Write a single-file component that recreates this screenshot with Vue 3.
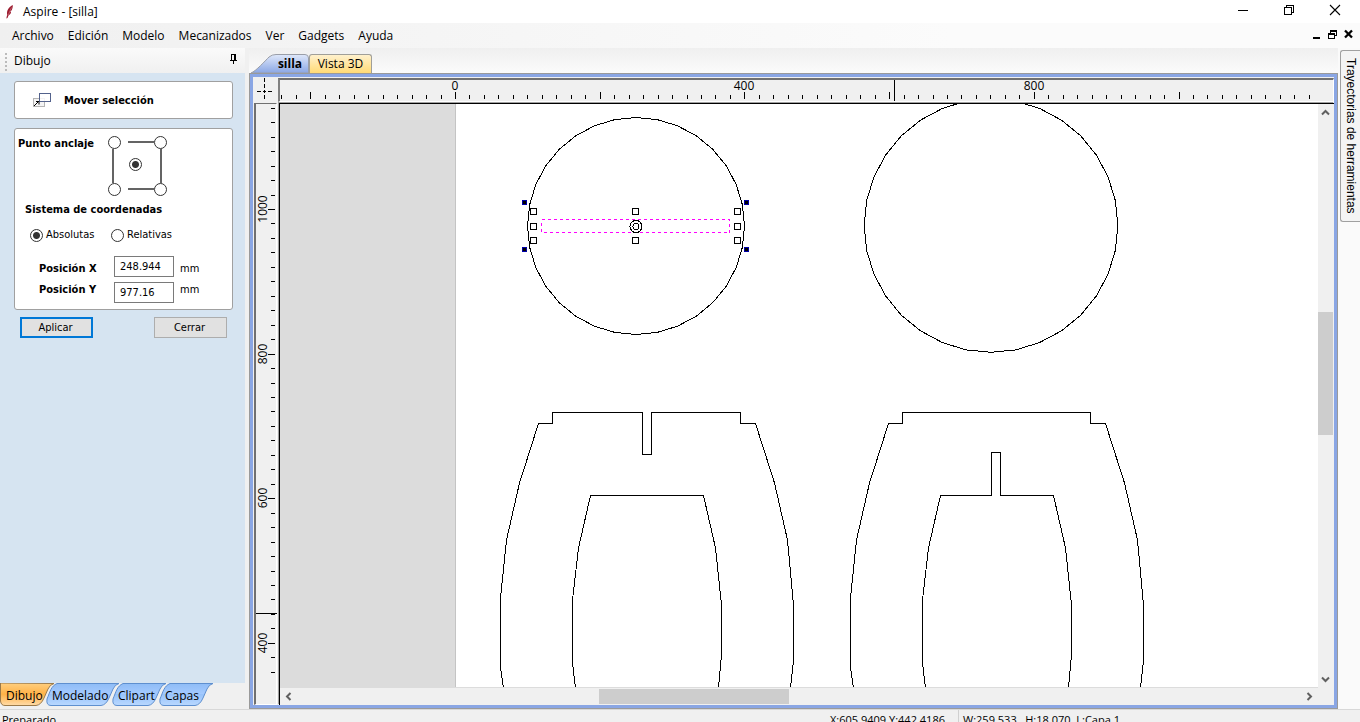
<script setup>
import { ref } from 'vue'

const menus = ['Archivo', 'Edición', 'Modelo', 'Mecanizados', 'Ver', 'Gadgets', 'Ayuda']
const anchors = [
  { id: 'tl', label: 'Superior izquierda' },
  { id: 'tr', label: 'Superior derecha' },
  { id: 'c', label: 'Centro' },
  { id: 'bl', label: 'Inferior izquierda' },
  { id: 'br', label: 'Inferior derecha' }
]
const anchor = ref('c')
const coords = ref('abs')
const posX = ref('248.944')
const posY = ref('977.16')

const STEP = 14.47
const hTicks = []
for (let i = -12; i <= 59; i++) {
  hTicks.push({ x: Math.round(175 + i * STEP), major: i % 10 === 0, label: i >= 0 && i % 20 === 0 ? String(i * 20) : '' })
}
const vTicks = []
for (let i = -7; i <= 32; i++) {
  vTicks.push({ y: Math.round(105 + i * 14.46), major: i % 10 === 0, label: i % 10 === 0 ? String(1000 - i * 20) : '' })
}

function ring(cx, cy, r, n) {
  return Array.from({ length: n }, (_, i) => {
    const a = (i * 2 * Math.PI) / n
    return (cx + r * Math.cos(a)).toFixed(1) + ',' + (cy + r * Math.sin(a)).toFixed(1)
  }).join(' ')
}
const smallRing = ring(356, 122, 108.5, 32)
const bigRing = ring(711, 121.5, 126.8, 32)

const handles = [
  [253, 107], [355, 107], [457, 107],
  [253, 122], [457, 122],
  [253, 136], [355, 136], [457, 136]
]
const corners = [[242, 96], [464, 96], [242, 143], [464, 143]]
const bottomTabs = [
  { name: 'Dibujo', cls: 't1', w: 54 },
  { name: 'Modelado', cls: 't2', w: 73 },
  { name: 'Clipart', cls: 't3', w: 54 },
  { name: 'Capas', cls: 't4', w: 54 }
]
function tabPath(w) {
  return `M11 0.5 C5 3 4 9 1 16 Q0 22.5 5 22.5 H${w - 18} Q${w - 13} 22 ${w - 10} 15 L${w - 6} 6 Q${w - 4} 1.5 ${w} 0.5 Z`
}
</script>

<template>
  <div class="app">
    <header class="titlebar">
      <svg class="logo" width="8" height="14" viewBox="0 0 8 14">
        <path d="M6.8 0C3 1.500 .3 6 1.200 9.500L.3 13.500 1.500 13 2.500 10.500C4.500 9.500 5 8 5 6.800L4 6.800 5.700 5.200C6.500 3.500 6.800 2 6.800 0Z" fill="#9c1c30" />
        <path d="M5.500 2.500 2 10.500" stroke="#d98a94" stroke-width=".6" />
      </svg>
      <span class="title">Aspire - [silla]</span>
      <div class="winbtns">
        <button type="button" aria-label="Minimizar"><svg width="12" height="12" shape-rendering="crispEdges"><path d="M1 6.500H11" stroke="#000" /></svg></button>
        <button type="button" aria-label="Restaurar"><svg width="12" height="12" shape-rendering="crispEdges"><path d="M1.500 3.500H8.500V10.500H1.500ZM3.500 3V1.500H10.500V8.500H9" fill="none" stroke="#000" /></svg></button>
        <button type="button" aria-label="Cerrar ventana"><svg width="12" height="12"><path d="M1 1 11 11M11 1 1 11" stroke="#000" stroke-width="1.100" /></svg></button>
      </div>
    </header>

    <nav class="menubar">
      <button v-for="m in menus" :key="m" type="button" class="menu">{{ m }}</button>
      <div class="mdi">
        <button type="button" aria-label="Minimizar documento"><svg width="11" height="11" shape-rendering="crispEdges"><path d="M2 9H9" stroke="#000" stroke-width="2" /></svg></button>
        <button type="button" aria-label="Restaurar documento"><svg width="11" height="11" shape-rendering="crispEdges"><path d="M1.500 5V9.500H7.500V5M3.500 4V1.500H9.500V6.500H8" fill="none" stroke="#000" /><path d="M1 5H8M3 2H10" stroke="#000" stroke-width="2" /></svg></button>
        <button type="button" aria-label="Cerrar documento"><svg width="11" height="11"><path d="M2 1.500 9 8.500M9 1.500 2 8.500" stroke="#000" stroke-width="2.300" /></svg></button>
      </div>
    </nav>

    <main class="work">
      <aside class="panel">
        <div class="phead">
          <span class="grip"></span>
          <span>Dibujo</span>
          <button type="button" class="pin" aria-label="Fijar panel">
            <svg width="9" height="10" shape-rendering="crispEdges"><path d="M2.500 0.500H6.500V6M2.500 0V6M1 6.500H8M4.500 6V10" fill="none" stroke="#000" /><path d="M6 0V6" stroke="#000" stroke-width="2" /></svg>
          </button>
        </div>
        <form class="pbody" @submit.prevent>
          <h1 class="tool">
            <svg width="20" height="17" viewBox="0 0 20 17">
              <rect x="1.500" y="6.500" width="11" height="8" fill="#f4f4f4" stroke="#b4b4b4" />
              <rect x="7.500" y="1.500" width="11" height="8" fill="#fff" fill-opacity=".85" stroke="#53628c" />
              <path d="M2 14 6.500 9.500M4 9.500H7V12.500" fill="none" stroke="#000" />
            </svg>
            <span>Mover selección</span>
          </h1>
          <div class="box">
            <div class="anchorrow">
              <b>Punto anclaje</b>
              <div class="anchors" role="radiogroup" aria-label="Punto anclaje">
                <svg class="wires" width="59" height="60" shape-rendering="crispEdges"><path d="M20 6H46M20 53H46M5 13V47M53 13V47" stroke="#646464" stroke-width="2" /></svg>
                <input v-for="a in anchors" :key="a.id" v-model="anchor" type="radio" name="anchor" :value="a.id" :class="a.id" :aria-label="a.label">
              </div>
            </div>
            <b class="sys">Sistema de coordenadas</b>
            <div class="modes">
              <label><input v-model="coords" type="radio" name="coords" value="abs">Absolutas</label>
              <label><input v-model="coords" type="radio" name="coords" value="rel">Relativas</label>
            </div>
            <div class="fields">
              <label class="upper" for="px">Posición X</label><input id="px" v-model="posX" type="text"><span class="upper">mm</span>
              <label class="lower" for="py">Posición Y</label><input id="py" v-model="posY" type="text"><span class="lower">mm</span>
            </div>
          </div>
          <div class="actions">
            <button type="submit" class="primary">Aplicar</button>
            <button type="button">Cerrar</button>
          </div>
        </form>
        <div class="ptabs">
          <button v-for="t in bottomTabs" :key="t.name" type="button" :class="['ptab', t.cls]">
            <svg :width="t.w + 1" height="24">
              <defs>
                <linearGradient id="gBlue" x1="0" y1="0" x2="0" y2="1"><stop offset="0" stop-color="#8fbcf6" /><stop offset=".48" stop-color="#a4caff" /><stop offset=".5" stop-color="#98c3fb" /><stop offset="1" stop-color="#b9d8ff" /></linearGradient>
                <linearGradient id="gOrange" x1="0" y1="0" x2="0" y2="1"><stop offset="0" stop-color="#ffcf80" /><stop offset=".5" stop-color="#ffb247" /><stop offset="1" stop-color="#ffdba8" /></linearGradient>
              </defs>
              <path v-if="t.cls === 't1'" d="M.5 0V18Q1 22.500 5 22.500H36Q41 22 44 15L48 6Q50 1.500 54 .5Z" fill="url(#gOrange)" stroke="#9b7a4a" />
              <path v-else :d="tabPath(t.w)" fill="url(#gBlue)" stroke="#5e8fcf" />
            </svg>
            <span>{{ t.name }}</span>
          </button>
        </div>
      </aside>

      <section class="dock">
        <div class="dtabs">
          <button type="button" class="dtab silla">
            <svg width="60" height="20">
              <defs><linearGradient id="gTab" x1="0" y1="0" x2="0" y2="1"><stop offset="0" stop-color="#dfe8fa" /><stop offset="1" stop-color="#8aa6e4" /></linearGradient></defs>
              <path d="M0 20C5 18 14 8 18 4Q21 1.500 25 1.500H54Q57.500 1.500 57.500 5V20Z" fill="url(#gTab)" stroke="#9a9ea8" />
            </svg>
            <b>silla</b>
          </button>
          <button type="button" class="dtab vista">Vista 3D</button>
        </div>
        <div class="frame">
          <div class="origin">
            <svg width="25" height="26" shape-rendering="crispEdges"><path d="M11.500 1V5M11.500 7V11M11.500 13V16M11.500 18V22M4 14.500H8M10 14.500H13M15 14.500H19" stroke="#000" /></svg>
          </div>
          <div class="hruler">
            <svg width="100%" height="21">
              <g shape-rendering="crispEdges" stroke="#000">
                <path v-for="t in hTicks" :key="t.x" :d="`M${t.x + 0.5} ${t.major ? 12 : 15}V19`" />
                <path d="M614.500 0V21" />
              </g>
              <g text-anchor="middle"><text v-for="t in hTicks.filter(k => k.label)" :key="t.label" :x="t.x" y="10">{{ t.label }}</text></g>
            </svg>
          </div>
          <div class="vruler">
            <svg width="21" height="100%">
              <g shape-rendering="crispEdges" stroke="#000">
                <path v-for="t in vTicks" :key="t.y" :d="`M${t.major ? 12 : 15} ${t.y + 0.5}H19`" />
                <path d="M0 509.500H21" />
              </g>
              <g text-anchor="middle"><text v-for="t in vTicks.filter(k => k.label)" :key="t.label" :transform="`translate(11 ${t.y}) rotate(-90)`">{{ t.label }}</text></g>
            </svg>
          </div>
          <div class="view">
            <div class="canvas">
              <svg width="100%" height="100%" shape-rendering="crispEdges" role="img" aria-label="Vectores de la pieza silla">
                <rect width="100%" height="100%" fill="#fff" />
                <rect width="175" height="100%" fill="#dcdcdc" />
                <rect x="175" width="1" height="100%" fill="#c4c4c4" />
                <g fill="none" stroke="#000">
                  <polygon :points="smallRing" />
                  <polygon :points="bigRing" />
                  <path d="M223.500 584 220.500 563V494L226.500 436 239.500 379 258.500 319.500H272.500V308.500H362.500V350.500H371.500V308.500H460.500V319.500H475.500L494.500 379 507.500 436 513.500 501V556L510.500 584" />
                  <path d="M295.500 584 292.500 559V496L298.500 444 310.500 391.500H423.500L435.500 444 441.500 501V551L438.500 584" />
                  <path d="M573.500 584 570.500 563V494L576.500 436 589.500 379 608.500 319.500H622.500V308.500H810.500V319.500H825.500L844.500 379 857.500 436 863.500 501V556L860.500 584" />
                  <path d="M645.500 584 642.500 559V496L648.500 444 660.500 391.500H711.500V348.500H720.500V391.500H773.500L785.500 444 791.500 501V551L788.500 584" />
                </g>
                <rect x="261.500" y="115.500" width="188" height="13" fill="none" stroke="#f0f" stroke-dasharray="3 3" />
                <rect v-for="(c, i) in corners" :key="'c' + i" :x="c[0] + .5" :y="c[1] + .5" width="4" height="4" fill="#000" stroke="#0000a8" />
                <g v-for="(h, i) in handles" :key="'h' + i"><rect :x="h[0] - 2.500" :y="h[1] - 2.500" width="6" height="6" fill="#fff" stroke="#000" /></g>
                <circle cx="356" cy="122.500" r="6" fill="none" stroke="#000" />
                <circle cx="356" cy="122.500" r="3" fill="none" stroke="#000" />
              </svg>
            </div>
            <div class="vscroll">
              <button type="button" aria-label="Subir"><svg width="9" height="7"><path d="M1 5.500 4.500 2 8 5.500" /></svg></button>
              <i class="va"></i><i class="vt"></i><i class="vb"></i>
              <button type="button" aria-label="Bajar"><svg width="9" height="7"><path d="M1 1.500 4.500 5 8 1.500" /></svg></button>
            </div>
            <div class="hscroll">
              <button type="button" aria-label="Izquierda"><svg width="7" height="9"><path d="M5.500 1 2 4.500 5.500 8" /></svg></button>
              <i class="ha"></i><i class="ht"></i><i class="hb"></i>
              <button type="button" aria-label="Derecha"><svg width="7" height="9"><path d="M1.500 1 5 4.500 1.500 8" /></svg></button>
            </div>
          </div>
        </div>
      </section>

      <aside class="side"><button type="button">Trayectorias de herramientas</button></aside>
    </main>

    <footer class="status">
      <span class="ready">Preparado</span>
      <span class="xy">X:605.9409 Y:442.4186</span>
      <span class="dims">W:259.533&nbsp;&nbsp; H:18.070&nbsp; L:Capa 1</span>
    </footer>
  </div>
</template>

<style>
html, body { margin: 0; overflow: hidden; }
</style>

<style scoped>
.app { height: 100vh; display: flex; flex-direction: column; overflow: hidden; background: #f0f0f0; color: #000; font: 12px/16px "Open Sans", "Noto Sans", sans-serif; }
.app * { box-sizing: border-box; }
button { padding: 0; margin: 0; border: 0; background: none; font: inherit; color: inherit; }
svg { display: block; }
.titlebar { flex: none; height: 23px; background: #fff; display: flex; align-items: center; padding-left: 6px; }
.title { margin-left: 9px; }
.winbtns { margin-left: auto; display: flex; align-self: flex-start; padding-right: 2px; }
.winbtns button { width: 46px; height: 20px; display: grid; place-items: center; }
.menubar { flex: none; height: 25px; display: flex; align-items: center; background: linear-gradient(90deg, #f0f0f0, #fbfbfb 70%); padding-left: 5px; }
.menu { padding: 0 7px; }
.mdi { margin-left: auto; display: flex; gap: 5px; padding: 0 6px 2px 0; }
.work { flex: 1; min-height: 0; display: grid; grid-template-columns: 245px 1fr 22px; }
.panel { display: flex; flex-direction: column; min-height: 0; }
.phead { height: 25px; display: flex; align-items: center; background: linear-gradient(#fafafa, #f0f0f0); }
.grip { width: 2px; height: 18px; margin: 2px 7px 0 5px; background: repeating-linear-gradient(#bbb 0 2px, transparent 2px 4px); }
.pin { margin: 0 7px 4px auto; }
.pbody { flex: 1; background: #d6e4f1; padding: 8px 12px 0 14px; font: 11px/16px "DejaVu Sans Condensed", "DejaVu Sans", sans-serif; }
.tool { margin: 0; height: 38px; display: flex; align-items: center; gap: 12px; padding-left: 17px; font: inherit; font-weight: bold; border: 1px solid #a0a0a0; border-radius: 3px; background: #fff; }
.tool span { padding-top: 1px; }
.box { margin-top: 9px; height: 182px; border: 1px solid #a0a0a0; border-radius: 3px; background: #fff; padding-left: 3px; }
.anchorrow { display: flex; padding-top: 7px; height: 73px; }
.anchorrow b { width: 90px; }
.anchors { position: relative; width: 59px; height: 60px; display: grid; grid-template-columns: 21px 25px 13px; grid-template-rows: 22px 25px 13px; }
.wires { position: absolute; left: 0; top: 0; }
input[type=radio] { position: relative; appearance: none; width: 13px; height: 13px; margin: 0; border: 1px solid #333; border-radius: 50%; background: #fff; }
input[type=radio]:checked { background: radial-gradient(circle, #333 3px, #fff 4px); }
.tl { grid-area: 1 / 1; } .tr { grid-area: 1 / 3; } .c { grid-area: 2 / 2; } .bl { grid-area: 3 / 1; } .br { grid-area: 3 / 3; }
.sys { display: block; padding-left: 7px; }
.modes { display: flex; padding: 9px 0 0 12px; }
.modes label { width: 81px; display: flex; align-items: center; gap: 3px; }
.fields { display: grid; grid-template-columns: 96px 60px 1fr; row-gap: 5px; padding-top: 13px; }
.upper { align-self: end; }
.lower { align-self: start; }
.fields label { font-weight: bold; padding-left: 21px; }
.fields input { width: 60px; height: 21px; border: 1px solid #7a7a7a; padding: 0 5px; background: #fff; font: inherit; color: inherit; }
.fields span { padding-left: 6px; }
.actions { display: flex; justify-content: space-between; padding: 7px 6px; }
.actions button { width: 73px; height: 21px; border: 1px solid #adadad; padding: 1px 2px 0 0; background: #e1e1e1; }
.actions .primary { border: 2px solid #0078d7; }
.ptabs { flex: none; height: 26px; display: flex; }
.ptab { position: relative; height: 24px; text-align: left; display: block; }
.ptab svg { position: absolute; left: 0; top: 0; }
.ptab span { position: relative; display: block; line-height: 21px; padding-left: 6px; }
.t1 { width: 46px; z-index: 4; } .t2 { width: 66px; z-index: 3; } .t3 { width: 47px; z-index: 2; } .t4 { width: 54px; z-index: 1; }
.dock { display: flex; flex-direction: column; min-width: 0; min-height: 0; padding-left: 4px; }
.dtabs { height: 25px; flex: none; display: flex; align-items: flex-end; background: linear-gradient(#efefef, #fbfbfb); }
.dtab { position: relative; }
.silla { width: 60px; height: 20px; margin-left: 2px; }
.silla svg { position: absolute; left: 0; bottom: 0; }
.silla b { position: relative; padding-left: 18px; line-height: 22px; }
.vista { height: 19px; width: 63px; margin-left: -2px; border: 1px solid #a09f98; border-bottom: 0; border-radius: 3px 3px 0 0; background: linear-gradient(#fff1cd, #ffda75); }
.frame { flex: 1; min-height: 0; display: grid; grid-template-columns: 25px 1fr; grid-template-rows: 26px 1fr; border: 3px solid #8aa6e4; outline: 1px solid #9a9a9a; margin: 1px; background: #f0f0f0; }
.hruler { border: 1px solid #fff; border-top: 2px solid #707070; border-left: 2px solid #808080; height: 24px; margin-top: 1px; }
.hruler svg, .vruler svg { overflow: visible; }
.vruler { border-left: 2px solid #707070; border-top: 1px solid #707070; border-right: 1px solid #fff; border-bottom: 1px solid #fff; margin: 0 1px; min-height: 0; }
.hruler text, .vruler text { font-size: 12px; }
.view { display: grid; min-width: 0; min-height: 0; margin-left: 1px; grid-template-columns: 1fr 16px; grid-template-rows: 1fr 17px; border-left: 1px solid #000; border-top: 1px solid #000; box-shadow: -1px -1px #a0a0a0; background: #f0f0f0; }
.canvas { overflow: hidden; min-height: 0; border-bottom: 1px solid #dcdcdc; }
.vscroll { display: flex; flex-direction: column; padding-right: 1px; }
.hscroll { display: flex; padding: 1px 0; }
.vscroll button { height: 17px; display: grid; place-items: center; }
.hscroll button { width: 17px; display: grid; place-items: center; }
.vscroll path, .hscroll path { fill: none; stroke: #606060; stroke-width: 2; }
.va { flex: 191; } .vt { flex: 123; background: #cdcdcd; } .vb { flex: 236; }
.ha { flex: 302; } .ht { flex: 190; background: #cdcdcd; } .hb { flex: 512; }
.side { background: #fafafa; padding: 2px 0 0 2px; }
.side button { writing-mode: vertical-rl; width: 20px; height: 172px; border: 1px solid #a0a0a0; border-right: 0; border-radius: 3px 0 0 3px; background: #f4f4f4; font: 12px/16px "Liberation Sans", sans-serif; }
.status { flex: none; height: 13px; display: flex; border-top: 1px solid #d8d8d8; white-space: nowrap; overflow: hidden; line-height: 20px; font-size: 11px; }
.ready { padding-left: 2px; flex: 1; }
.xy { width: 128px; height: 20px; }
.dims { width: 402px; height: 20px; border-left: 1px solid #d0d0d0; padding-left: 4px; }
</style>
